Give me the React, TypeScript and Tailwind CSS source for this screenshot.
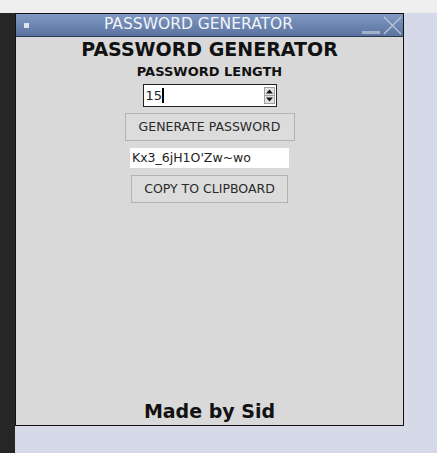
const font = { fontFamily: '"DejaVu Sans", sans-serif' }

function SpinArrows() {
  return (
    <svg width="11" height="17" viewBox="0 0 11 17">
      <rect x="0.5" y="0.5" width="10" height="16" fill="#e2e2e2" stroke="#a0a0a0" />
      <line x1="1" y1="8.5" x2="10" y2="8.5" stroke="#a0a0a0" />
      <path d="M2 6.5 L5.5 2.5 L9 6.5 Z" fill="#111" />
      <path d="M2 10.5 L5.5 14.5 L9 10.5 Z" fill="#111" />
    </svg>
  )
}

export default function App() {
  const length = '15'
  const password = "Kx3_6jH1O'Zw~wo"

  return (
    <div className="w-[437px] h-[453px] flex flex-col bg-[#d6d9e8] overflow-hidden" style={font}>
      {/* strip along the top */}
      <div className="h-[13px] bg-[#eeeeee] shrink-0" />
      <div className="flex flex-1">
        <div className="w-[15px] bg-[#262626] shrink-0" />
        {/* window */}
        <div className="w-[389px] h-[413px] border border-[#111] bg-[#d9d9d9] flex flex-col">
          <div className="h-[23px] shrink-0 flex items-center bg-gradient-to-b from-[#809ac4] to-[#5a739f] border-b border-[#2c3a55]">
            <div className="w-[5px] h-[5px] bg-[#dfe4ef] ml-[8px]" />
            <div className="flex-1 text-center text-[15.5px] leading-none text-[#f2f4f8] pl-[6px]">PASSWORD GENERATOR</div>
            <div className="flex items-end gap-[3px] mr-[1px]">
              <div className="w-[18px] h-[3px] bg-[#a3b1ca] mb-[1px]" />
              <svg width="19" height="19" viewBox="0 0 19 19">
                <path d="M1 1 L18 18 M18 1 L1 18" stroke="#bcc7dc" strokeWidth="1.2" />
              </svg>
            </div>
          </div>

          <div className="flex-1 flex flex-col items-center">
            <h1 className="text-[19px] font-bold text-[#111] leading-none mt-[3px]">PASSWORD GENERATOR</h1>
            <div className="text-[13px] font-bold text-[#111] leading-none mt-[6px]">PASSWORD LENGTH</div>
            <div className="mt-[6px] w-[134px] h-[23px] bg-white border border-[#222] flex items-center">
              <div className="flex-1 flex items-center h-full pl-[2px] text-[13px] text-[#222]">
                {length}
                <span className="w-[2px] h-[15px] bg-black" />
              </div>
              <div className="pr-[1px] flex items-center">
                <SpinArrows />
              </div>
            </div>
            <button className="mt-[6px] w-[170px] h-[28px] bg-[#dcdcdc] border border-[#b3b3b3] text-[12.5px] text-[#2a2a2a]" style={font}>
              GENERATE PASSWORD
            </button>
            <div className="mt-[7px] w-[159px] h-[20px] bg-white flex items-center px-[2px] text-[12.5px] text-[#222]">
              {password}
            </div>
            <button className="mt-[7px] w-[157px] h-[28px] bg-[#dcdcdc] border border-[#b3b3b3] text-[12.5px] text-[#2a2a2a]" style={font}>
              COPY TO CLIPBOARD
            </button>
            <div className="flex-1" />
            <div className="text-[19px] font-bold text-[#111] leading-none mb-[4px]">Made by Sid</div>
          </div>
        </div>
      </div>
    </div>
  )
}
